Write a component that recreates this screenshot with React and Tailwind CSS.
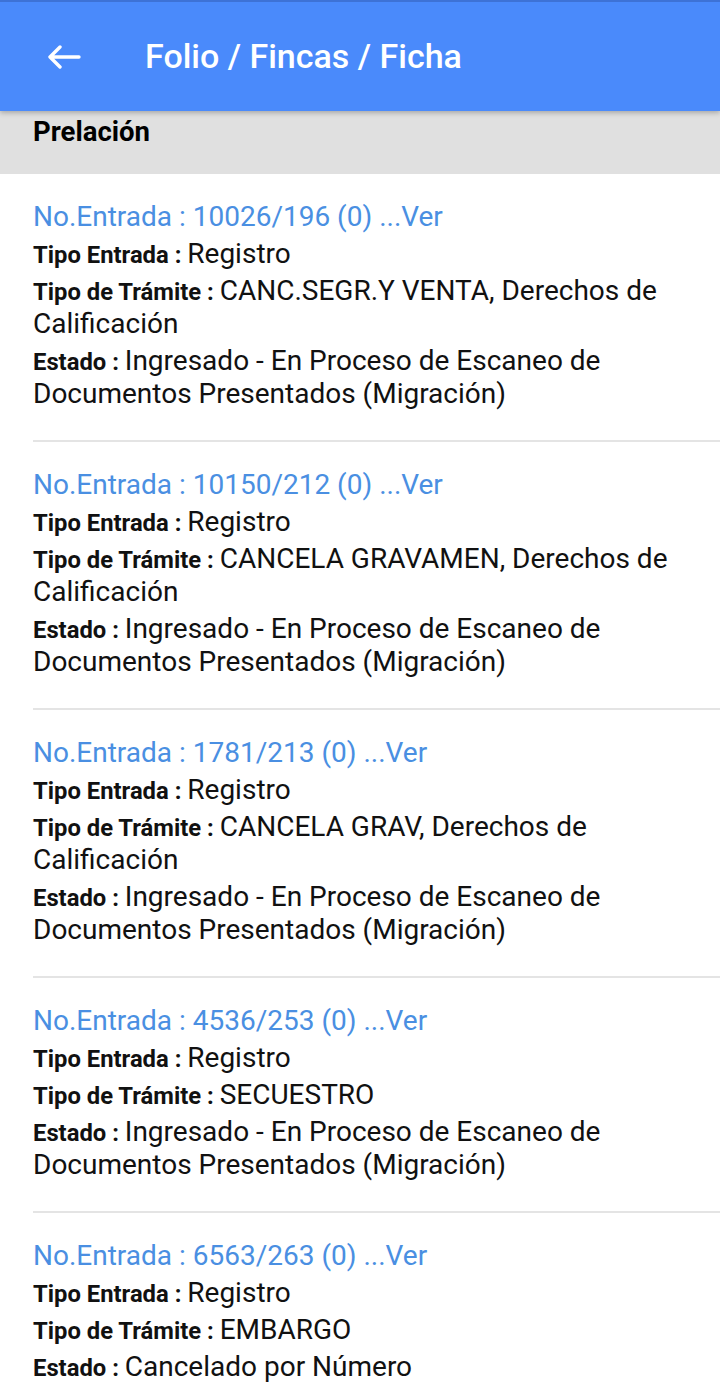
const entries = [
    {
        numero: '10026/196 (0)',
        tipoEntrada: 'Registro',
        tramite: 'CANC.SEGR.Y VENTA, Derechos de Calificación',
        estado: 'Ingresado - En Proceso de Escaneo de Documentos Presentados (Migración)',
    },
    {
        numero: '10150/212 (0)',
        tipoEntrada: 'Registro',
        tramite: 'CANCELA GRAVAMEN, Derechos de Calificación',
        estado: 'Ingresado - En Proceso de Escaneo de Documentos Presentados (Migración)',
    },
    {
        numero: '1781/213 (0)',
        tipoEntrada: 'Registro',
        tramite: 'CANCELA GRAV, Derechos de Calificación',
        estado: 'Ingresado - En Proceso de Escaneo de Documentos Presentados (Migración)',
    },
    {
        numero: '4536/253 (0)',
        tipoEntrada: 'Registro',
        tramite: 'SECUESTRO',
        estado: 'Ingresado - En Proceso de Escaneo de Documentos Presentados (Migración)',
    },
    {
        numero: '6563/263 (0)',
        tipoEntrada: 'Registro',
        tramite: 'EMBARGO',
        estado: 'Cancelado por Número',
    },
]

const BackArrow = () => (
    <svg width="34" height="24" viewBox="0 0 34 24" fill="none" className="ml-[47px]">
        <path
            d="M32 12H3M13 2L3 12l10 10"
            stroke="white"
            strokeWidth="3.4"
            strokeLinecap="round"
            strokeLinejoin="round"
        />
    </svg>
)

const Field = ({ label, value }) => (
    <p className="text-[28px] leading-[33px] text-[#111]">
        <span className="text-[23.8px] leading-none font-bold">{label} : </span>
        {value}
    </p>
)

const App = () => {
    return (
        <div className="min-h-screen bg-white font-['Roboto',sans-serif]">
            {/* Toolbar */}
            <header className="relative z-10 h-[111px] bg-[#4a8afb] border-t-2 border-[#3d72d6] flex items-center shadow-[0_2px_5px_rgba(0,0,0,0.25)]">
                <BackArrow />
                <h1 className="ml-[64px] text-[34px] font-medium text-white">Folio / Fincas / Ficha</h1>
            </header>

            {/* Section header */}
            <div className="h-[63px] bg-[#e0e0e0] px-[33px]">
                <h2 className="text-[27.5px] font-bold text-black">Prelación</h2>
            </div>

            {/* Entries */}
            <div>
                {entries.map((entry, index) => (
                    <div
                        key={index}
                        className="ml-[33px] pr-[30px] pt-[26px] pb-[30px] border-b-2 border-[#e4e4e4] flex flex-col gap-[4px]"
                    >
                        <p className="text-[28px] leading-[33px] text-[#4a8fe2]">
                            No.Entrada : {entry.numero} ...Ver
                        </p>
                        <Field label="Tipo Entrada" value={entry.tipoEntrada} />
                        <Field label="Tipo de Trámite" value={entry.tramite} />
                        <Field label="Estado" value={entry.estado} />
                    </div>
                ))}
            </div>
        </div>
    )
}

export default App
